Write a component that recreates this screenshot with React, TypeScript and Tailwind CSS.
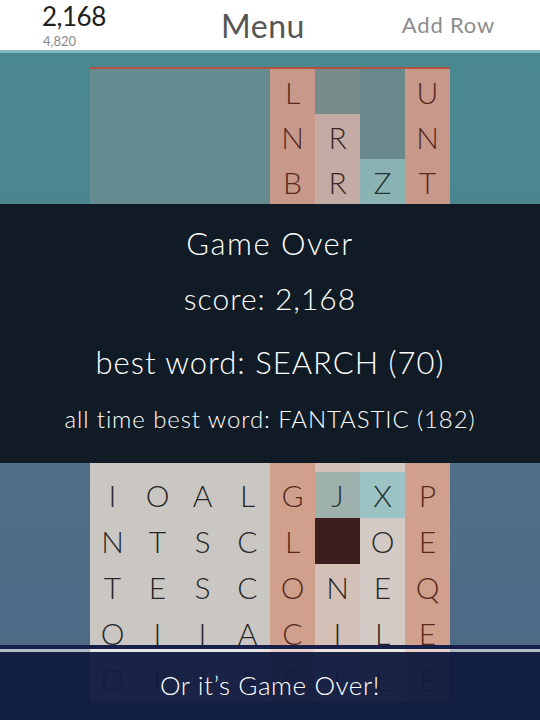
type Cell = { ch?: string; bg: string; fg?: string };

const SAL_TOP = "bg-[#c8998a]";
const SAL = "bg-[#d1a08c]";
const GRAY = "bg-[#cac6c2]";
const PINK = "bg-[#d5c0b8]";
const PALE = "bg-[#d3cac6]";
const BROWN = "text-[#55291f]";
const INK = "text-[#262626]";

const EMPTY_TOP = "bg-[#668b91]";

const topRows: Cell[][] = [
    [
        { bg: EMPTY_TOP }, { bg: EMPTY_TOP }, { bg: EMPTY_TOP }, { bg: EMPTY_TOP },
        { ch: "L", bg: SAL_TOP, fg: BROWN },
        { bg: "bg-[#788a8a]" },
        { bg: "bg-[#6a898c]" },
        { ch: "U", bg: SAL_TOP, fg: BROWN },
    ],
    [
        { bg: EMPTY_TOP }, { bg: EMPTY_TOP }, { bg: EMPTY_TOP }, { bg: EMPTY_TOP },
        { ch: "N", bg: SAL_TOP, fg: BROWN },
        { ch: "R", bg: "bg-[#c4aca4]", fg: "text-[#3a2a28]" },
        { bg: "bg-[#6a898c]" },
        { ch: "N", bg: SAL_TOP, fg: BROWN },
    ],
    [
        { bg: EMPTY_TOP }, { bg: EMPTY_TOP }, { bg: EMPTY_TOP }, { bg: EMPTY_TOP },
        { ch: "B", bg: SAL_TOP, fg: BROWN },
        { ch: "R", bg: "bg-[#c4aca4]", fg: "text-[#3a2a28]" },
        { ch: "Z", bg: "bg-[#8cb3b3]", fg: "text-[#1f3333]" },
        { ch: "T", bg: SAL_TOP, fg: BROWN },
    ],
];

const strip = [GRAY, GRAY, GRAY, GRAY, SAL, PINK, PALE, SAL];

const bottomRows: Cell[][] = [
    [
        { ch: "I", bg: GRAY, fg: INK }, { ch: "O", bg: GRAY, fg: INK },
        { ch: "A", bg: GRAY, fg: INK }, { ch: "L", bg: GRAY, fg: INK },
        { ch: "G", bg: SAL, fg: BROWN },
        { ch: "J", bg: "bg-[#9fb1ac]", fg: "text-[#263230]" },
        { ch: "X", bg: "bg-[#9cc3c3]", fg: "text-[#1f3030]" },
        { ch: "P", bg: SAL, fg: BROWN },
    ],
    [
        { ch: "N", bg: GRAY, fg: INK }, { ch: "T", bg: GRAY, fg: INK },
        { ch: "S", bg: GRAY, fg: INK }, { ch: "C", bg: GRAY, fg: INK },
        { ch: "L", bg: SAL, fg: BROWN },
        { bg: "bg-[#3b1e1e]" },
        { ch: "O", bg: PALE, fg: INK },
        { ch: "E", bg: SAL, fg: BROWN },
    ],
    [
        { ch: "T", bg: GRAY, fg: INK }, { ch: "E", bg: GRAY, fg: INK },
        { ch: "S", bg: GRAY, fg: INK }, { ch: "C", bg: GRAY, fg: INK },
        { ch: "O", bg: SAL, fg: BROWN },
        { ch: "N", bg: PINK, fg: INK },
        { ch: "E", bg: PALE, fg: INK },
        { ch: "Q", bg: SAL, fg: BROWN },
    ],
    [
        { ch: "O", bg: GRAY, fg: INK }, { ch: "I", bg: GRAY, fg: INK },
        { ch: "I", bg: GRAY, fg: INK }, { ch: "A", bg: GRAY, fg: INK },
        { ch: "C", bg: SAL, fg: BROWN },
        { ch: "I", bg: PINK, fg: INK },
        { ch: "L", bg: PALE, fg: INK },
        { ch: "E", bg: SAL, fg: BROWN },
    ],
    [
        { ch: "O", bg: GRAY, fg: INK }, { ch: "I", bg: GRAY, fg: INK },
        { ch: "I", bg: GRAY, fg: INK }, { ch: "A", bg: GRAY, fg: INK },
        { ch: "C", bg: SAL, fg: BROWN },
        { ch: "I", bg: PINK, fg: INK },
        { ch: "L", bg: PALE, fg: INK },
        { ch: "E", bg: SAL, fg: BROWN },
    ],
];

function Row({ cells, h }: { cells: Cell[]; h: string }) {
    return (
        <div className="grid grid-cols-8">
            {cells.map((c, i) => (
                <div
                    key={i}
                    className={`${h} ${c.bg} ${c.fg ?? ""} flex items-center justify-center text-[30px] font-light leading-none`}
                >
                    {c.ch}
                </div>
            ))}
        </div>
    );
}

export default function App() {
    return (
        <div
            className="relative h-[720px] w-[540px] overflow-hidden flex flex-col"
            style={{ fontFamily: "Lato, 'Open Sans', sans-serif" }}
        >
            {/* Header */}
            <header className="h-[50px] bg-white flex items-start shrink-0">
                <div className="w-[180px] pl-[42px] pt-[1px]">
                    <div className="text-[26px] leading-[30px] text-[#1e1e1e] tracking-[-0.5px]">2,168</div>
                    <div className="text-[13px] leading-[16px] text-[#8a8a8a] pl-[1px] mt-[2px]">4,820</div>
                </div>
                <div className="flex-1 text-center pt-[7px] mr-[14px]">
                    <span className="text-[32px] leading-[38px] text-[#555] tracking-[0.5px]">Menu</span>
                </div>
                <div className="w-[180px] text-right pr-[45px] pt-[11px]">
                    <span className="text-[22px] leading-[28px] text-[#8c8c8c] tracking-[0.8px]">Add Row</span>
                </div>
            </header>
            <div className="h-[3px] bg-[#80b9c0] shrink-0" />

            {/* Play area */}
            <main className="flex-1 flex flex-col bg-[linear-gradient(to_bottom,#4a888f_0%,#4a8690_24%,#4f7088_62%,#4c6784_100%)]">
                <div className="w-[360px] mx-auto mt-[14px]">
                    <div className="h-[2px] bg-[#b4513f]" />
                    {topRows.map((r, i) => (
                        <Row key={i} cells={r} h="h-[45px]" />
                    ))}
                </div>

                {/* Game over panel */}
                <section className="h-[259px] bg-[#111b25] text-white flex flex-col items-center font-light">
                    <div className="mt-[22px] text-[31px] leading-[34px] tracking-[1.5px]">Game Over</div>
                    <div className="mt-[21px] text-[30px] leading-[34px] tracking-[1px]">score: 2,168</div>
                    <div className="mt-[29px] text-[31px] leading-[36px] tracking-[1px]">best word: SEARCH (70)</div>
                    <div className="mt-[24px] text-[24px] leading-[30px] tracking-[0.9px]">all time best word: FANTASTIC (182)</div>
                </section>

                <div className="w-[360px] mx-auto">
                    <div className="grid grid-cols-8">
                        {strip.map((b, i) => (
                            <div key={i} className={`h-[9px] ${b}`} />
                        ))}
                    </div>
                    {bottomRows.map((r, i) => (
                        <Row key={i} cells={r} h="h-[46px]" />
                    ))}
                </div>
            </main>

            {/* Bottom banner */}
            <div className="absolute left-0 right-0 bottom-0 h-[75px] flex flex-col">
                <div className="h-[4px] bg-[#16204a]" />
                <div className="h-[3px] bg-white/55" />
                <div className="flex-1 bg-[#0f1a3e]/95 flex items-center justify-center pb-[1px]">
                    <span className="text-white text-[26px] font-light tracking-[0.6px]">Or it’s Game Over!</span>
                </div>
            </div>
        </div>
    );
}
